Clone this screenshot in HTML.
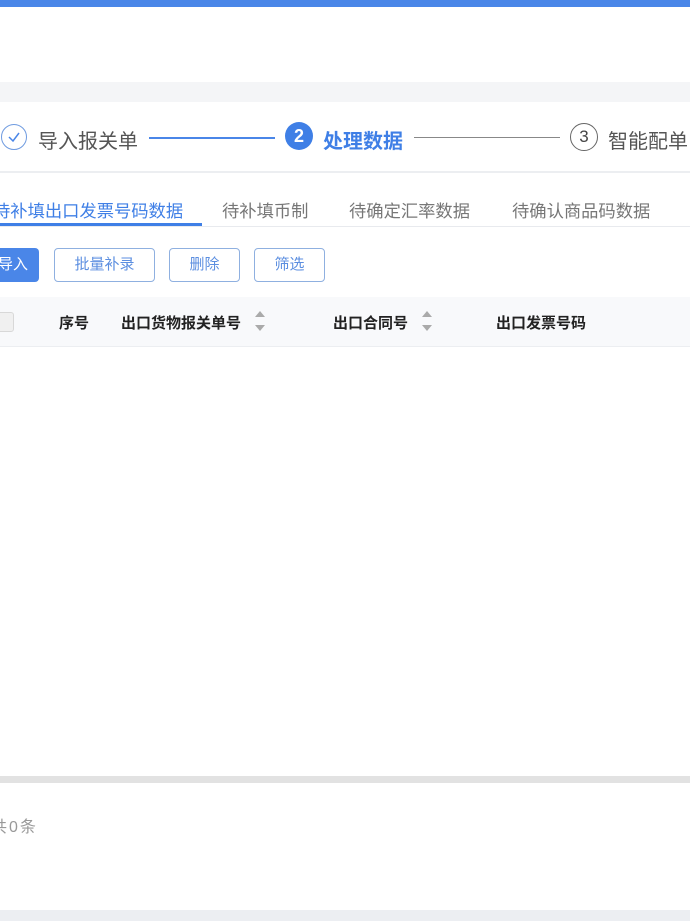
<!DOCTYPE html>
<html><head><meta charset="utf-8"><style>
*{margin:0;padding:0;box-sizing:border-box}
body{width:690px;height:921px;overflow:hidden;position:relative;background:#fff;font-family:"Liberation Sans","Noto Sans CJK SC",sans-serif}
.a{position:absolute;white-space:nowrap}
</style></head><body>
<div class="a" style="left:0;top:0;width:690px;height:7px;background:#4a86e8"></div>
<div class="a" style="left:0;top:82px;width:690px;height:20px;background:#f4f5f7"></div>
<div class="a" style="left:1px;top:124px;width:26px;height:26px;border:1.5px solid #6f9be0;border-radius:50%"></div>
<svg class="a" style="left:6px;top:130px" width="16" height="14"><path d="M3 7 L7 11 L13 3" fill="none" stroke="#4a86e8" stroke-width="1.5"/></svg>
<div class="a" style="left:38px;top:125px;font-size:20px;color:#555">导入报关单</div>
<div class="a" style="left:149px;top:137px;width:126px;height:2px;background:#4a86e8"></div>
<div class="a" style="left:285px;top:122px;width:28px;height:28px;border-radius:50%;background:#3f7fe6;color:#fff;font-size:18px;font-weight:bold;text-align:center;line-height:28px">2</div>
<div class="a" style="left:323px;top:125px;font-size:20px;color:#3f7fe6;font-weight:bold">处理数据</div>
<div class="a" style="left:414px;top:137px;width:146px;height:1px;background:#888"></div>
<div class="a" style="left:570px;top:123px;width:28px;height:28px;border:1.5px solid #666;border-radius:50%;color:#444;font-size:17px;text-align:center;line-height:25px">3</div>
<div class="a" style="left:608px;top:125px;font-size:20px;color:#555">智能配单</div>
<div class="a" style="left:0;top:171px;width:690px;height:2px;background:#eceef1"></div>
<div class="a" style="left:-7px;top:197px;font-size:17.3px;color:#3f7fe6">待补填出口发票号码数据</div>
<div class="a" style="left:222px;top:197px;font-size:17.3px;color:#777">待补填币制</div>
<div class="a" style="left:349px;top:197px;font-size:17.3px;color:#777">待确定汇率数据</div>
<div class="a" style="left:512px;top:197px;font-size:17.3px;color:#777">待确认商品码数据</div>
<div class="a" style="left:0;top:223px;width:202px;height:3px;background:#3f7fe6"></div>
<div class="a" style="left:0;top:226px;width:690px;height:1px;background:#e8eaee"></div>
<div class="a" style="left:-10px;top:248px;width:49px;height:34px;background:#4a86e8;border-radius:4px;color:#fff;font-size:15px;line-height:34px;padding-left:8px">导入</div>
<div class="a" style="left:54px;top:248px;width:101px;height:34px;border:1px solid #8fb0e0;border-radius:4px;color:#5b8ee0;font-size:15px;line-height:32px;text-align:center">批量补录</div>
<div class="a" style="left:169px;top:248px;width:71px;height:34px;border:1px solid #8fb0e0;border-radius:4px;color:#5b8ee0;font-size:15px;line-height:32px;text-align:center">删除</div>
<div class="a" style="left:254px;top:248px;width:71px;height:34px;border:1px solid #8fb0e0;border-radius:4px;color:#5b8ee0;font-size:15px;line-height:32px;text-align:center">筛选</div>
<div class="a" style="left:0;top:297px;width:690px;height:50px;background:#f8f9fb;border-bottom:1px solid #eceef1"></div>
<div class="a" style="left:-6px;top:312px;width:20px;height:20px;border:1px solid #d8d8d8;border-radius:3px;background:#f0f0f0"></div>
<div class="a" style="left:59px;top:312px;font-size:15px;font-weight:bold;color:#222">序号</div>
<div class="a" style="left:121px;top:312px;font-size:15px;font-weight:bold;color:#222">出口货物报关单号</div>
<div class="a" style="left:255px;top:311px;width:0;height:0;border:5px solid transparent;border-bottom:6px solid #aaa;border-top:0"></div>
<div class="a" style="left:255px;top:325px;width:0;height:0;border:5px solid transparent;border-top:6px solid #aaa;border-bottom:0"></div>
<div class="a" style="left:333px;top:312px;font-size:15px;font-weight:bold;color:#222">出口合同号</div>
<div class="a" style="left:422px;top:311px;width:0;height:0;border:5px solid transparent;border-bottom:6px solid #aaa;border-top:0"></div>
<div class="a" style="left:422px;top:325px;width:0;height:0;border:5px solid transparent;border-top:6px solid #aaa;border-bottom:0"></div>
<div class="a" style="left:496px;top:312px;font-size:15px;font-weight:bold;color:#222">出口发票号码</div>
<div class="a" style="left:0;top:776px;width:690px;height:7px;background:#e2e2e2"></div>
<div class="a" style="left:-9px;top:813px;font-size:16px;color:#999;letter-spacing:2px">共0条</div>
<div class="a" style="left:0;top:910px;width:690px;height:11px;background:#eceef2"></div>
</body></html>
